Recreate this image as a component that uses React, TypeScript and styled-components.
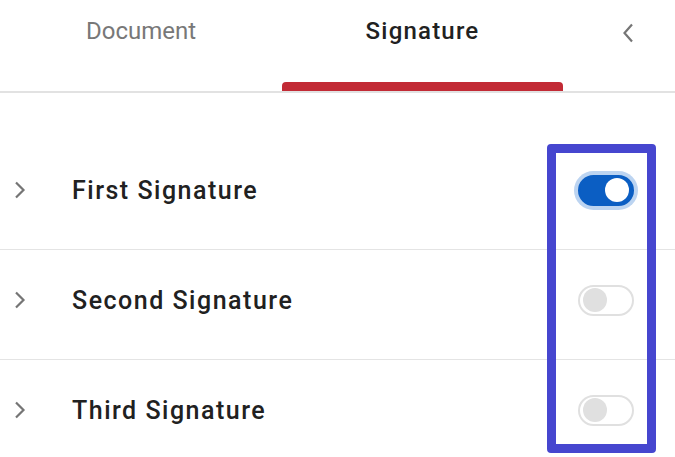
import * as React from 'react';
import styled, { createGlobalStyle } from 'styled-components';

const GlobalStyle = createGlobalStyle`
    html, body {
        margin: 0;
        padding: 0;
        background: #ffffff;
    }
    body {
        font-family: Roboto, "Noto Sans", "Liberation Sans", sans-serif;
        -webkit-font-smoothing: antialiased;
    }
`;

const Page = styled.div`
    width: 675px;
    height: 457px;
    overflow: hidden;
    background: #ffffff;
`;

const Header = styled.div`
    display: grid;
    grid-template-columns: 282px 281px 1fr;
    height: 91px;
    border-bottom: 2px solid #e2e2e2;
`;

const Tab = styled.div`
    display: flex;
    flex-direction: column;
    cursor: pointer;
`;

const TabLabel = styled.div<{ active: boolean }>`
    height: 62px;
    display: flex;
    align-items: center;
    justify-content: center;
    font-size: 24px;
    font-weight: ${props => (props.active ? 500 : 400)};
    letter-spacing: ${props => (props.active ? '1.2px' : '0')};
    color: ${props => (props.active ? '#212121' : '#787878')};
`;

const Indicator = styled.div<{ active: boolean }>`
    margin-top: auto;
    height: 9px;
    border-radius: 4px 4px 0 0;
    background: ${props => (props.active ? '#c22a35' : 'transparent')};
`;

const CollapseButton = styled.button`
    height: 66px;
    display: flex;
    align-items: center;
    justify-content: flex-end;
    padding: 0 41px 0 0;
    border: 0;
    background: none;
    cursor: pointer;
    color: #757575;
`;

const List = styled.div`
    position: relative;
    padding-top: 47px;
`;

const Row = styled.div`
    display: flex;
    align-items: center;
    height: 100px;
    padding: 0 41px 9px 14px;
    border-bottom: 1px solid #e4e4e4;
    &:last-of-type {
        border-bottom: 0;
    }
`;

const Expand = styled.span`
    display: inline-flex;
    width: 12px;
    color: #757575;
`;

const RowLabel = styled.span`
    margin-left: 46px;
    font-size: 25px;
    font-weight: 500;
    letter-spacing: 1.5px;
    color: #212121;
`;

const Track = styled.span<{ on: boolean }>`
    margin-left: auto;
    position: relative;
    box-sizing: border-box;
    width: 56px;
    height: 31px;
    border-radius: 16px;
    border: 2px solid ${props => (props.on ? '#0b5ec3' : '#e0e0e0')};
    background: ${props => (props.on ? '#0b5ec3' : '#ffffff')};
    box-shadow: ${props => (props.on ? '0 0 0 4px #bcd4f1' : 'none')};
    display: flex;
    align-items: center;
    justify-content: ${props => (props.on ? 'flex-end' : 'flex-start')};
    padding: 0 3px;
`;

const Knob = styled.span<{ on: boolean }>`
    width: 24px;
    height: 24px;
    border-radius: 50%;
    background: ${props => (props.on ? '#ffffff' : '#e0e0e0')};
`;

const Highlight = styled.div`
    position: absolute;
    left: 547px;
    top: 51px;
    width: 109px;
    height: 309px;
    box-sizing: border-box;
    border: 9px solid #4646cf;
    border-radius: 4px;
    pointer-events: none;
`;

const ChevronRight = () => (
    <svg width="12" height="18" viewBox="0 0 12 18" fill="none">
        <polyline points="2,1.5 9.5,9 2,16.5" stroke="currentColor" strokeWidth="2.2" />
    </svg>
);

const ChevronLeft = () => (
    <svg width="12" height="20" viewBox="0 0 12 20" fill="none">
        <polyline points="10,1.5 2.5,10 10,18.5" stroke="currentColor" strokeWidth="2.2" />
    </svg>
);

type Signature = {
    name: string;
    enabled: boolean;
};

const signatures: Signature[] = [
    { name: 'First Signature', enabled: true },
    { name: 'Second Signature', enabled: false },
    { name: 'Third Signature', enabled: false },
];

const App: React.FC = () => {
    const [tab, setTab] = React.useState('signature');

    return (
        <Page>
            <GlobalStyle />
            <Header>
                <Tab onClick={() => setTab('document')}>
                    <TabLabel active={tab === 'document'}>Document</TabLabel>
                    <Indicator active={tab === 'document'} />
                </Tab>
                <Tab onClick={() => setTab('signature')}>
                    <TabLabel active={tab === 'signature'}>Signature</TabLabel>
                    <Indicator active={tab === 'signature'} />
                </Tab>
                <CollapseButton aria-label="collapse">
                    <ChevronLeft />
                </CollapseButton>
            </Header>
            <List>
                {signatures.map(sig => (
                    <Row key={sig.name}>
                        <Expand><ChevronRight /></Expand>
                        <RowLabel>{sig.name}</RowLabel>
                        <Track on={sig.enabled}>
                            <Knob on={sig.enabled} />
                        </Track>
                    </Row>
                ))}
                <Highlight />
            </List>
        </Page>
    );
};

export default App;
